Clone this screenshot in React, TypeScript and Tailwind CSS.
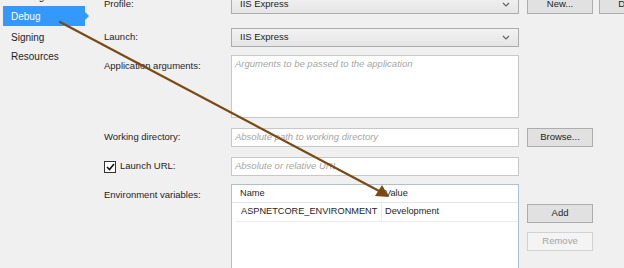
import React from 'react';

const font = { fontFamily: '"Liberation Sans", Arial, sans-serif' };

function Chevron() {
  return (
    <svg width="8" height="5" viewBox="0 0 8 5" className="mr-[8px]">
      <path d="M1 1 L4 4 L7 1" fill="none" stroke="#606060" strokeWidth="1.1" />
    </svg>
  );
}

function Select({ value }: { value: string }) {
  return (
    <div className="h-[19px] w-[288px] flex items-center justify-between border border-[#acacac] bg-gradient-to-b from-[#f2f2f2] to-[#e5e5e5] text-[9.5px] text-[#1e1e1e] pl-[8px]">
      <span>{value}</span>
      <Chevron />
    </div>
  );
}

function Input({ placeholder, tall }: { placeholder: string; tall?: boolean }) {
  return (
    <div
      className={`w-[288px] border border-[#c8c8c8] bg-white text-[9.5px] italic text-[#a6a6a6] pl-[3px] ${
        tall ? 'h-[63px] pt-[1px]' : 'h-[19px] flex items-center'
      }`}
    >
      {placeholder}
    </div>
  );
}

function Button({ label, disabled }: { label: string; disabled?: boolean }) {
  return (
    <div
      className={`h-[19px] w-[66px] flex items-center justify-center text-[9.5px] border ${
        disabled
          ? 'border-[#d2d2d2] bg-[#f4f4f4] text-[#a3a3a3]'
          : 'border-[#adadad] bg-[#e1e1e1] text-[#1e1e1e]'
      }`}
    >
      {label}
    </div>
  );
}

export default function App() {
  return (
    <div className="relative w-[624px] h-[268px] overflow-hidden bg-[#f0f0f0] text-[#1e1e1e]" style={font}>
      <div className="flex">
        {/* Sidebar */}
        <div className="w-[104px] shrink-0 -mt-[14px] pl-[3px] text-[10px]">
          <div className="h-[20px] pl-[8px] flex items-center">Package</div>
          <div className="relative h-[20px] w-[82px] pl-[8px] flex items-center bg-[#3399ff] text-white">
            Debug
            <span className="absolute -right-[4px] top-[6px] w-0 h-0 border-y-[4px] border-y-transparent border-l-[4px] border-l-[#3399ff]" />
          </div>
          <div className="h-[20px] pl-[8px] mt-[1px] flex items-center">Signing</div>
          <div className="h-[19px] pl-[8px] flex items-center">Resources</div>
        </div>

        {/* Form */}
        <div className="flex flex-col -mt-[5px] text-[9.5px]">
          <div className="flex items-center gap-[8px]">
            <div className="w-[119px]">Profile:</div>
            <Select value="IIS Express" />
            <Button label="New..." />
            <div className="ml-[-2px]">
              <Button label="Delete" />
            </div>
          </div>

          <div className="flex items-center gap-[8px] mt-[14px]">
            <div className="w-[119px]">Launch:</div>
            <Select value="IIS Express" />
          </div>

          <div className="flex gap-[8px] mt-[8px]">
            <div className="w-[119px] pt-[4px]">Application arguments:</div>
            <Input placeholder="Arguments to be passed to the application" tall />
          </div>

          <div className="flex items-center gap-[8px] mt-[10px]">
            <div className="w-[119px]">Working directory:</div>
            <Input placeholder="Absolute path to working directory" />
            <Button label="Browse..." />
          </div>

          <div className="flex items-center gap-[8px] mt-[10px]">
            <div className="w-[119px] flex items-center gap-[4px]">
              <span className="w-[12px] h-[12px] border border-[#333] bg-white flex items-center justify-center">
                <svg width="9" height="8" viewBox="0 0 9 8">
                  <path d="M1 4 L3.5 6.5 L8 1" fill="none" stroke="#111" strokeWidth="1.6" />
                </svg>
              </span>
              Launch URL:
            </div>
            <Input placeholder="Absolute or relative URL" />
          </div>

          <div className="flex gap-[8px] mt-[8px]">
            <div className="w-[119px] pt-[4px]">Environment variables:</div>
            <div className="w-[288px] h-[90px] border border-[#adbfd1] bg-white text-[9.2px]">
              <div className="h-[18px] flex items-center border-b border-[#e5e5e5] pl-[8px]">
                <span className="w-[145px]">Name</span>
                <span>Value</span>
              </div>
              <div className="h-[19px] ml-[4px] flex items-center border-b border-[#ececec]">
                <span className="w-[146px] pl-[5px] border-r border-[#ececec] h-full flex items-center">
                  ASPNETCORE_ENVIRONMENT
                </span>
                <span className="pl-[3px]">Development</span>
              </div>
            </div>
            <div className="flex flex-col gap-[9px] pt-[20px]">
              <Button label="Add" />
              <Button label="Remove" disabled />
            </div>
          </div>
        </div>
      </div>

      {/* Annotation arrow */}
      <svg className="absolute inset-0 pointer-events-none" width="624" height="268">
        <line x1="60" y1="22" x2="381" y2="192" stroke="#7a4a12" strokeWidth="2.2" strokeLinecap="round" />
        <path d="M389 197 L375 196 L382 185 Z" fill="#7a4a12" />
      </svg>
    </div>
  );
}
